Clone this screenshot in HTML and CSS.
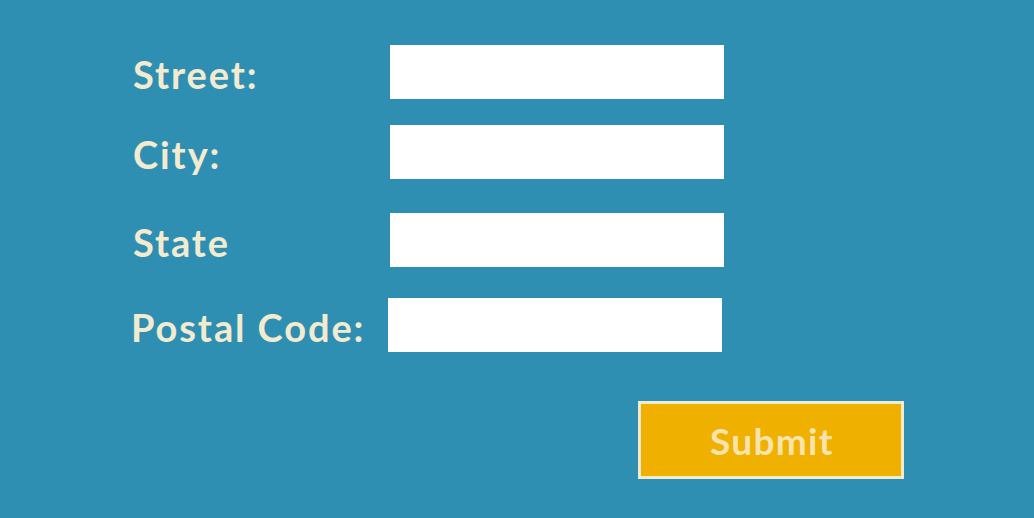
FILE: index.html
```html
<!DOCTYPE html>
<html lang="en">
<head>
<meta charset="utf-8">
<title>Address form</title>
<link rel="stylesheet" href="styles.css">
</head>
<body>
<form class="form">
  <div class="row">
    <label class="label" for="street">Street:</label>
    <input class="field" id="street" type="text">
  </div>
  <div class="row row-2">
    <label class="label" for="city">City:</label>
    <input class="field" id="city" type="text">
  </div>
  <div class="row row-3">
    <label class="label" for="state">State</label>
    <input class="field" id="state" type="text">
  </div>
  <div class="row row-4">
    <label class="label" for="postal">Postal Code:</label>
    <input class="field" id="postal" type="text">
  </div>
  <div class="actions">
    <button class="submit" type="button">Submit</button>
  </div>
</form>
</body>
</html>
```
FILE: styles.css
```css
html, body {
  margin: 0;
  padding: 0;
}
body {
  width: 1034px;
  height: 518px;
  background: #2f8fb3;
  font-family: "Lato", "Open Sans", sans-serif;
  overflow: hidden;
}
.form {
  display: flex;
  flex-direction: column;
  padding: 45px 0 0 133px;
}
.row {
  display: flex;
  align-items: center;
  height: 54px;
}
.row-2 { margin-top: 26px; }
.row-3 { margin-top: 34px; }
.row-4 { margin-top: 31px; margin-left: -2px; }
.label {
  width: 257px;
  flex: none;
  color: #f3ebcf;
  font-size: 38px;
  font-weight: 700;
  letter-spacing: 1.9px;
  line-height: 1;
  padding-top: 4px;
}
.field {
  width: 334px;
  height: 54px;
  border: none;
  background: #ffffff;
  padding: 0;
  margin: 0;
  box-sizing: border-box;
}
.actions {
  display: flex;
  margin-top: 49px;
  padding-left: 505px;
}
.submit {
  width: 266px;
  height: 78px;
  box-sizing: border-box;
  border: 3px solid #f3ebcf;
  background: #f0b000;
  color: #f6e4ac;
  font-family: "Lato", "Open Sans", sans-serif;
  font-size: 37px;
  font-weight: 700;
  letter-spacing: 1.3px;
  padding: 0 0 0 2px;
  margin: 0;
}
```
